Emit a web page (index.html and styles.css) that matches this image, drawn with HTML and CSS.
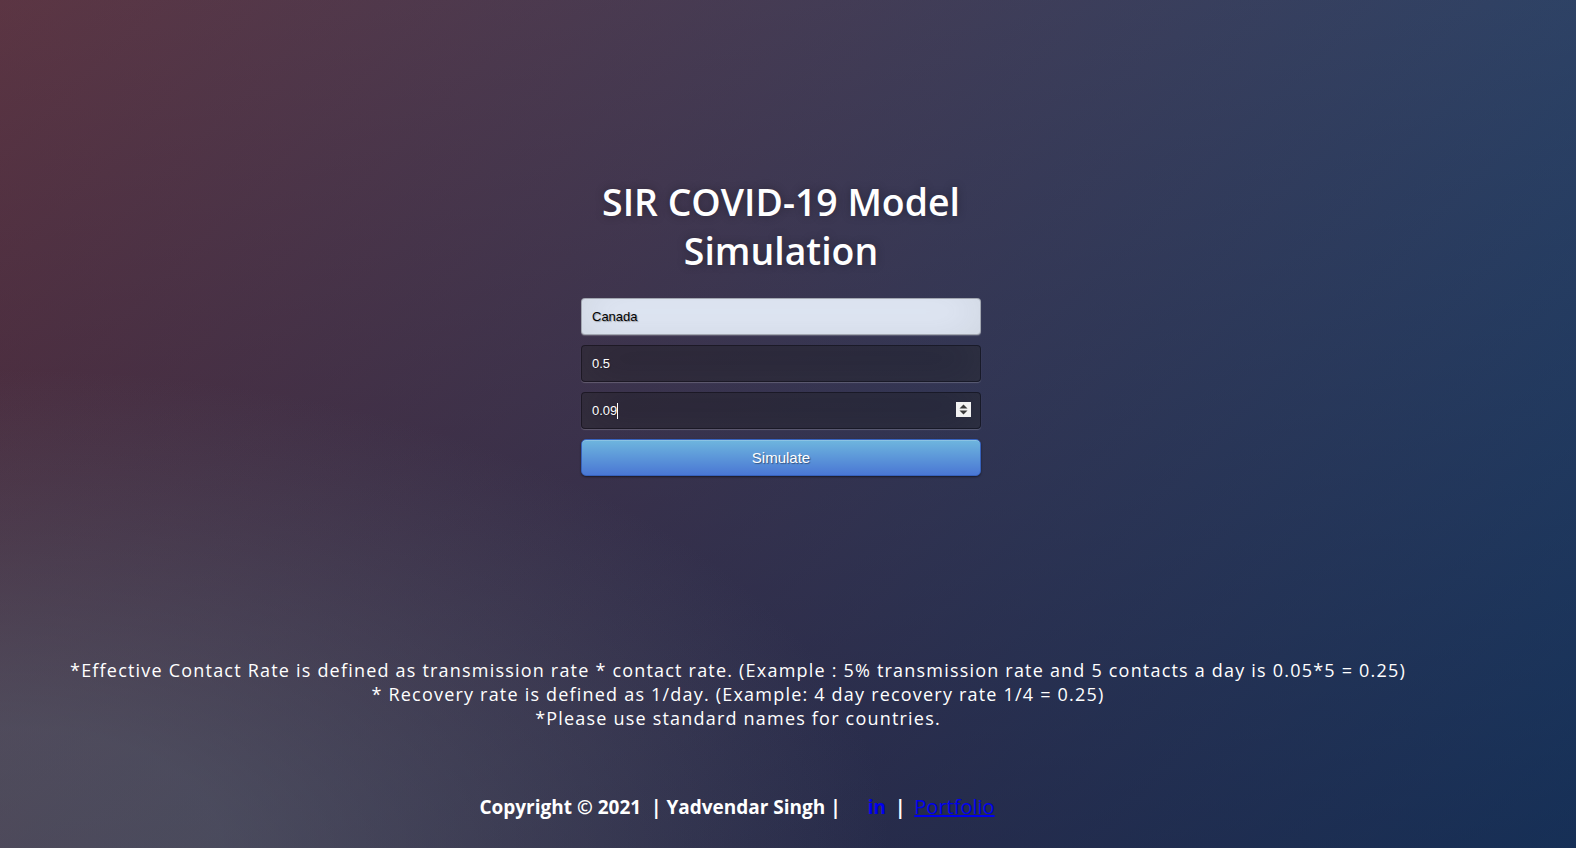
FILE: index.html
```html
<!DOCTYPE html>
<html lang="en">
<head>
<meta charset="utf-8">
<title>SIR COVID-19 Model Simulation</title>
<link rel="stylesheet" href="styles.css">
</head>
<body>
<main class="page">
  <section class="login">
    <h1 class="title">SIR COVID-19 Model Simulation</h1>
    <form class="form">
      <input class="field field-filled" type="text" value="Canada">
      <input class="field" type="text" value="0.5">
      <div class="field-wrap">
        <input class="field" type="text" value="0.09">
        <span class="caret"></span>
        <span class="spinner">
          <svg width="15" height="15" viewBox="0 0 15 15"><rect width="15" height="15" fill="#f2f2f2"/><path d="M7.5 2.5 L11.5 6.5 H3.5 Z" fill="#3a3a3a"/><path d="M3.5 8.5 H11.5 L7.5 12.5 Z" fill="#3a3a3a"/></svg>
        </span>
      </div>
      <button class="btn" type="button">Simulate</button>
    </form>
  </section>
  <section class="notes">
    <p>*Effective Contact Rate is defined as transmission rate * contact rate. (Example : 5% transmission rate and 5 contacts a day is 0.05*5 = 0.25)</p>
    <p>* Recovery rate is defined as 1/day. (Example: 4 day recovery rate 1/4 = 0.25)</p>
    <p>*Please use standard names for countries.</p>
  </section>
  <footer class="footer">
    <span>Copyright © 2021 &nbsp;| Yadvendar Singh |</span>
    <a class="in" href="#">in</a>
    <span class="sep">|</span>
    <a class="link" href="#">Portfolio</a>
  </footer>
</main>
</body>
</html>
```
FILE: styles.css
```css
* { box-sizing: border-box; }
html, body { margin: 0; height: 100%; }
body {
  width: 100%;
  height: 848px;
  overflow: hidden;
  background: #092756;
  background:
    radial-gradient(ellipse farthest-corner at 0% 100%, rgba(104,128,138,.4) 10%, rgba(138,114,76,0) 40%),
    linear-gradient(to bottom, rgba(57,173,219,.25) 0%, rgba(42,60,87,.4) 100%),
    linear-gradient(135deg, #670d10 0%, #092756 100%);
  font-family: "Open Sans", "Noto Sans", sans-serif;
  color: #fff;
}
.page {
  display: flex;
  flex-direction: column;
  align-items: stretch;
  padding-top: 177px;
}
.login {
  width: 400px;
  margin: 0 auto;
  position: relative;
  left: -7px;
}
.title {
  margin: 0 0 23px;
  font-size: 37.4px;
  line-height: 49px;
  font-weight: 600;
  text-align: center;
  letter-spacing: 0;
  text-shadow: 0 0 10px rgba(0,0,0,0.3);
}
.form {
  display: flex;
  flex-direction: column;
  gap: 10px;
}
.field {
  width: 100%;
  display: block;
  height: 37px;
  padding: 10px;
  font-family: "Liberation Sans", Arial, sans-serif;
  font-size: 13px;
  line-height: 15px;
  color: #fff;
  background: rgba(0,0,0,0.3);
  border: 1px solid rgba(0,0,0,0.3);
  border-radius: 4px;
  outline: none;
  text-shadow: 1px 1px 1px rgba(0,0,0,0.3);
  box-shadow: inset 0 -5px 45px rgba(100,100,100,0.2), 0 1px 1px rgba(255,255,255,0.2);
}
.field-filled {
  background: #e8f0fe;
  color: #000;
}
.field-wrap { position: relative; }
.caret {
  position: absolute;
  left: 36px;
  top: 11px;
  width: 1px;
  height: 16px;
  background: #fff;
}
.spinner {
  position: absolute;
  right: 10px;
  top: 10px;
  width: 15px;
  height: 15px;
  display: block;
}
.spinner svg { display: block; }
.btn {
  display: block;
  width: 100%;
  height: 37px;
  padding: 0 14px;
  font-family: "Liberation Sans", Arial, sans-serif;
  font-size: 15px;
  color: #fff;
  background: linear-gradient(to bottom, #6eb6de, #4a77d4);
  border: 1px solid #3762bc;
  border-radius: 5px;
  text-shadow: 1px 1px 1px rgba(0,0,0,0.4);
  box-shadow: inset 0 1px 0 rgba(255,255,255,0.2), 0 1px 2px rgba(0,0,0,0.5);
}
.notes {
  margin-top: 182px;
  padding-right: 100px;
  text-align: center;
  font-size: 18px;
  line-height: 24px;
  letter-spacing: 1.2px;
}
.notes p { margin: 0; }
.footer {
  margin-top: 64px;
  padding-right: 102px;
  text-align: center;
  font-size: 19px;
  line-height: 26px;
  font-weight: 700;
}
.in {
  color: #0000ee;
  text-decoration: none;
  font-weight: 700;
  margin-left: 22px;
}
.sep { margin: 0 4px; }
.link {
  color: #0000ee;
  font-weight: 400;
  font-size: 20px;
}
```
